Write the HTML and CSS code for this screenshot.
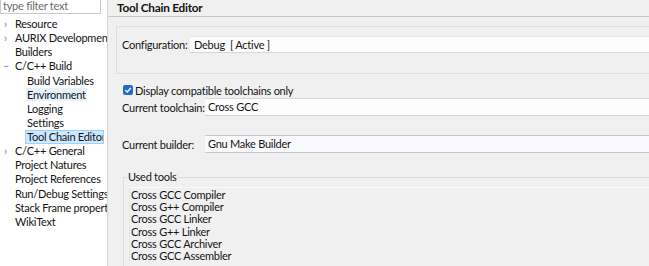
FILE: index.html
```html
<!DOCTYPE html>
<html>
<head>
<title>Properties - Tool Chain Editor</title>
<link rel="stylesheet" href="styles.css">
</head>
<body>

<div class="nav">
  <div class="filter">type filter text</div>
  <ul class="tree">
    <li class="top"><span class="tw">&#8250;</span>Resource</li>
    <li class="top"><span class="tw">&#8250;</span>AURIX Development</li>
    <li class="top">Builders</li>
    <li class="top"><span class="tw open">&#8250;</span>C/C++ Build</li>
    <li class="sub"><span class="lbl">Build Variables</span></li>
    <li class="sub"><span class="lbl hover">Environment</span></li>
    <li class="sub"><span class="lbl">Logging</span></li>
    <li class="sub"><span class="lbl">Settings</span></li>
    <li class="sub"><span class="lbl sel">Tool Chain Editor</span></li>
    <li class="top"><span class="tw">&#8250;</span>C/C++ General</li>
    <li class="top">Project Natures</li>
    <li class="top">Project References</li>
    <li class="top">Run/Debug Settings</li>
    <li class="top">Stack Frame properties</li>
    <li class="top">WikiText</li>
  </ul>
</div>

<div class="page">
  <div class="title">Tool Chain Editor</div>

  <div class="cfg">
    <span class="cfg-label">Configuration:</span>
    <div class="combo">Debug&nbsp; [ Active ]</div>
  </div>

  <div class="check">
    <span class="box">
      <svg width="10" height="10" viewBox="0 0 10 10"><path d="M2.3 5.2 L4.2 7 L7.8 3" fill="none" stroke="#fff" stroke-width="1.3"/></svg>
    </span>
    Display compatible toolchains only
  </div>

  <div class="row r-chain">
    <span class="row-label">Current toolchain:</span>
    <div class="field">Cross GCC</div>
  </div>

  <div class="row r-builder">
    <span class="row-label">Current builder:</span>
    <div class="field alt">Gnu Make Builder</div>
  </div>

  <div class="group">
    <span class="legend">Used tools</span>
    <ul class="tools">
      <li>Cross GCC Compiler</li>
      <li>Cross G++ Compiler</li>
      <li>Cross GCC Linker</li>
      <li>Cross G++ Linker</li>
      <li>Cross GCC Archiver</li>
      <li>Cross GCC Assembler</li>
    </ul>
  </div>
</div>

</body>
</html>
```

FILE: styles.css
```css
html, body { margin: 0; height: 266px; overflow: hidden; }
body { display: flex; background-color: #f0f0f0; color: #141414; letter-spacing: -0.25px;
       font-family: Lato, "Open Sans", sans-serif; font-size: 11px; }

/* left tree */
.nav { width: 107px; flex: none; background-color: #fff; border-right: 1px solid #d4d4d4;
       overflow: hidden; white-space: nowrap; }
.filter { width: 97px; height: 13px; padding-left: 2px; line-height: 12px; overflow: hidden;
          border: 1px solid #c9c9c9; border-top: none; color: #6b6b6b; }
.tree { list-style: none; margin: 3px 0 0 0; padding: 0; }
.tree li { height: 14.14px; line-height: 14.14px; }
.tree li.top { padding-left: 15px; position: relative; }
.tree li.sub { padding-left: 26px; }
.tw { position: absolute; left: 4px; top: 0; color: #777; font-size: 11px; }
.tw.open { transform: rotate(90deg); left: 5px; }
.lbl { display: inline-block; padding: 0 1px; height: 13px; line-height: 13px; }
.lbl.hover { background-color: #e5f1fb; }
.lbl.sel { background-color: #cce8ff; border: 1px solid #99d1ff; margin-left: -1px;
           width: 75px; height: 12px; line-height: 12px; overflow: hidden; }

/* right page */
.page { flex: 1; display: flex; flex-direction: column; overflow: hidden; white-space: nowrap; }
.title { height: 16px; line-height: 15px; padding-left: 9px; font-weight: bold; font-size: 11.8px;
         border-bottom: 1px solid #c8c8c8; }

.cfg { display: flex; align-items: center; margin: 9px -4px 0 8px; height: 46px;
       border: 1px solid #dedede; border-right: none; padding-left: 5px; }
.cfg-label { width: 68px; margin-top: -12px; }
.combo { flex: 1; height: 15px; line-height: 15px; padding-left: 4px; margin-top: -12px;
         background-color: #fdfdfd; border-top: 1px solid #e3e3e3; border-bottom: 1px solid #d6d6d6; }

.check { display: flex; align-items: center; margin: 10px 0 0 15px; height: 12px; }
.box { width: 10px; height: 10px; border-radius: 2px; background-color: #1f6fc9; margin-right: 2px;
       display: flex; }

.row { display: flex; align-items: center; padding-left: 14px; }
.r-chain { margin-top: 2px; }
.r-builder { margin-top: 19px; }
.row-label { width: 83px; }
.field { flex: 1; height: 16px; line-height: 16px; padding-left: 3px;
         background-color: #fdfdfd; border-top: 1px solid #d9d9d9; border-bottom: 1px solid #cfcfcf; }
.field.alt { background-color: #f9fafd; border-color: #cacaca; }

.group { position: relative; margin: 24px -4px 0 15px; border-top: 1px solid #dcdcdc;
         border-left: 1px solid #dcdcdc; flex: 1; }
.legend { position: absolute; left: 3px; top: -8px; background-color: #f0f0f0; padding: 0 1px;
          line-height: 14px; }
.tools { list-style: none; margin: 9px 0 0 5px; padding: 1px 0 0 1px; border-top: 1px solid #fbfbfb;
         border-left: 1px solid #e6e6e6; }
.tools li { height: 12.2px; line-height: 12.2px; }
```
